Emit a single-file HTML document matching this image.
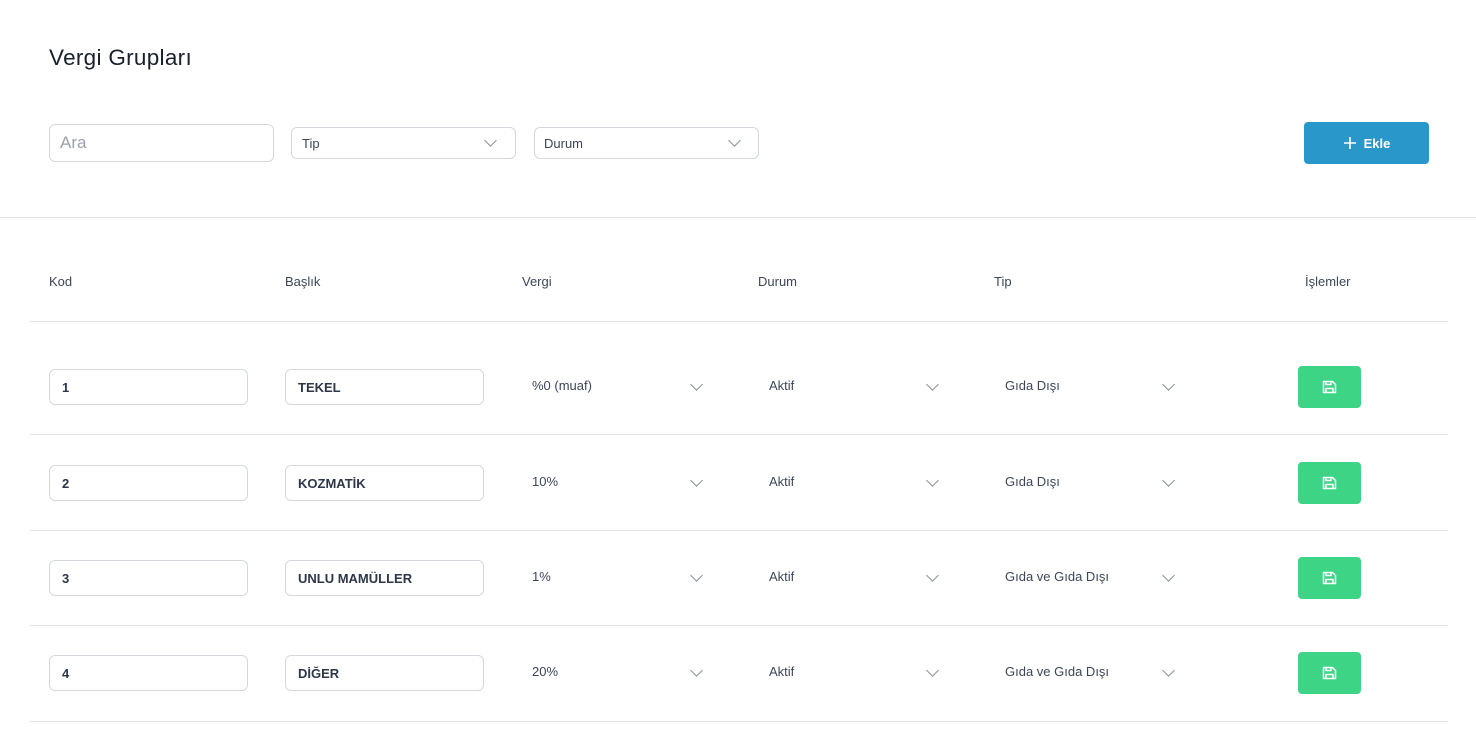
<!DOCTYPE html>
<html><head><meta charset="utf-8"><style>
body{margin:0;width:1476px;height:738px;background:#fff;font-family:"Liberation Sans",sans-serif;color:#2d3748;position:relative;overflow:hidden}
.a{position:absolute}
h1{position:absolute;left:49px;top:45px;margin:0;font-size:22.5px;font-weight:normal;color:#1a202c;letter-spacing:0.3px}
.box{position:absolute;border:1px solid #d4d8dd;border-radius:6px;box-sizing:border-box;font-size:13px;display:flex;align-items:center;padding-left:12px}
.chev{position:absolute;width:8px;height:8px;border-right:1.3px solid #8a929c;border-bottom:1.3px solid #8a929c;transform:rotate(45deg)}
.hl{position:absolute;left:30px;width:1418px;height:1px;background:#e2e4e7}
.th{position:absolute;top:274px;font-size:13px;color:#3c4657}
.t{position:absolute;font-size:13px;color:#3c4657}
.save{position:absolute;left:1298px;width:63px;height:42px;background:#3dd585;border-radius:4px}
</style></head><body>
<h1>Vergi Grupları</h1>
<div class="box" style="left:49px;top:124px;width:225px;height:38px;font-size:17px;color:#9aa1ab;padding-left:10px">Ara</div>
<div class="box" style="left:291px;top:127px;width:225px;height:32px;padding-left:10px;color:#3c4657">Tip</div>
<div class="chev" style="left:486px;top:136px"></div>
<div class="box" style="left:534px;top:127px;width:225px;height:32px;padding-left:9px;color:#3c4657">Durum</div>
<div class="chev" style="left:730px;top:136px"></div>
<div class="a" style="left:1304px;top:122px;width:125px;height:42px;background:#2a97cb;border-radius:4px;color:#fff;font-size:13px;font-weight:bold;display:flex;align-items:center;justify-content:center"><svg width="14" height="14" viewBox="0 0 14 14" style="margin-right:7px"><path d="M7 1v12M1 7h12" stroke="#fff" stroke-width="1.6"/></svg>Ekle</div>
<div class="a" style="left:0;top:217px;width:1476px;height:1px;background:#e2e4e7"></div>
<div class="th" style="left:49px">Kod</div><div class="th" style="left:285px">Başlık</div><div class="th" style="left:522px">Vergi</div><div class="th" style="left:758px">Durum</div><div class="th" style="left:994px">Tip</div><div class="th" style="left:1305px">İşlemler</div>
<div class="hl" style="top:321px"></div>
<div class="hl" style="top:434px"></div>
<div class="hl" style="top:530px"></div>
<div class="hl" style="top:625px"></div>
<div class="hl" style="top:721px"></div>
<script>
var rows=[[386,"1","TEKEL","%0 (muaf)","Gıda Dışı"],[482,"2","KOZMATİK","10%","Gıda Dışı"],[577,"3","UNLU MAMÜLLER","1%","Gıda ve Gıda Dışı"],[672,"4","DİĞER","20%","Gıda ve Gıda Dışı"]];
var h="";
rows.forEach(function(r){var c=r[0];
h+='<div class="box" style="left:49px;top:'+(c-17)+'px;width:199px;height:36px;font-weight:bold">'+r[1]+'</div>';
h+='<div class="box" style="left:285px;top:'+(c-17)+'px;width:199px;height:36px;font-weight:bold">'+r[2]+'</div>';
h+='<div class="t" style="left:532px;top:'+(c-8)+'px">'+r[3]+'</div><div class="chev" style="left:692px;top:'+(c-6)+'px"></div>';
h+='<div class="t" style="left:769px;top:'+(c-8)+'px">Aktif</div><div class="chev" style="left:928px;top:'+(c-6)+'px"></div>';
h+='<div class="t" style="left:1005px;top:'+(c-8)+'px">'+r[4]+'</div><div class="chev" style="left:1164px;top:'+(c-6)+'px"></div>';
h+='<div class="save" style="top:'+(c-20)+'px"><svg width="63" height="42" viewBox="0 0 63 42"><g fill="none" stroke="#fff" stroke-width="1.5" stroke-linejoin="round"><path d="M25.5 15.5h9l3 3v8h-12z"/><path d="M28 15.5v3h5v-3"/><path d="M28 26.5v-4h7v4"/></g></svg></div>';
});
document.write(h);
</script>
</body></html>
